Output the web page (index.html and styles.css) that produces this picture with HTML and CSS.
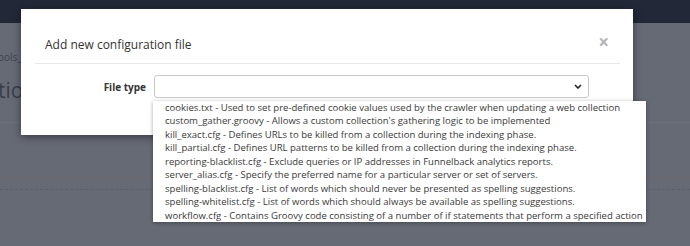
FILE: index.html
```html
<!DOCTYPE html>
<html lang="en">
<head>
    <meta charset="UTF-8">
    <meta name="viewport" content="width=device-width, initial-scale=1.0">
    <title>Add new configuration file</title>
    <link rel="stylesheet" href="styles.css">
</head>
<body>
    <!-- Страница под затемнением -->
    <header class="topbar"></header>
    <main class="page">
        <div class="crumbs">ools_collection</div>
        <h1 class="page-title">tion configuration</h1>
        <div class="panel-line"></div>
        <div class="rule"></div>
        <div class="dashed"></div>
    </main>

    <!-- Модальное окно -->
    <div class="modal">
        <div class="modal-header">
            <h2>Add new configuration file</h2>
            <span class="close">&times;</span>
        </div>
        <div class="modal-body">
            <div class="form-row">
                <label class="form-label">File type</label>
                <div class="select-wrap">
                    <div class="select-box">
                        <svg class="chevron" width="8" height="5" viewBox="0 0 8 5">
                            <path d="M1 1 L4 4 L7 1" fill="none" stroke="#222" stroke-width="1.6"/>
                        </svg>
                    </div>
                    <ul class="options">
                        <li>cookies.txt - Used to set pre-defined cookie values used by the crawler when updating a web collection</li>
                        <li>custom_gather.groovy - Allows a custom collection's gathering logic to be implemented</li>
                        <li>kill_exact.cfg - Defines URLs to be killed from a collection during the indexing phase.</li>
                        <li>kill_partial.cfg - Defines URL patterns to be killed from a collection during the indexing phase.</li>
                        <li>reporting-blacklist.cfg - Exclude queries or IP addresses in Funnelback analytics reports.</li>
                        <li>server_alias.cfg - Specify the preferred name for a particular server or set of servers.</li>
                        <li>spelling-blacklist.cfg - List of words which should never be presented as spelling suggestions.</li>
                        <li>spelling-whitelist.cfg - List of words which should always be available as spelling suggestions.</li>
                        <li>workflow.cfg - Contains Groovy code consisting of a number of if statements that perform a specified action</li>
                    </ul>
                </div>
            </div>
        </div>
    </div>
</body>
</html>
```

FILE: styles.css
```css
body {
    margin: 0;
    font-family: "Open Sans", "Liberation Sans", sans-serif;
    background-color: #666a75;
    color: #333;
    overflow: hidden;
}
.topbar {
    height: 23px;
    background-color: #232838;
}
.page {
    padding-top: 27px;
}
.crumbs {
    font-size: 10px;
    line-height: 14px;
    color: #3e424d;
    margin-left: -2px;
}
.page-title {
    margin: 14px 0 0 -2px;
    font-size: 21px;
    font-weight: normal;
    line-height: 24px;
    color: #3a3e49;
    white-space: nowrap;
}
.panel-line {
    margin-top: 20px;
    height: 1px;
    background-color: #6c707b;
}
.rule {
    margin-top: 54px;
    height: 1px;
    background-color: #6e6569;
}
.dashed {
    margin-top: 11px;
    border-top: 1px dashed #5c606b;
}
.modal {
    position: absolute;
    left: 21px;
    top: 9px;
    width: 612px;
    height: 126px;
    background-color: #fff;
    box-shadow: 0 2px 8px rgba(0,0,0,0.45);
}
.modal-header {
    display: flex;
    justify-content: space-between;
    align-items: flex-start;
    margin: 0 13px 0 14px;
    padding: 26px 11px 8px 10px;
    border-bottom: 1px solid #e8e8e8;
}
.modal-header h2 {
    margin: 0;
    font-size: 12px;
    font-weight: normal;
    line-height: 20px;
    color: #333;
}
.close {
    font-size: 19px;
    font-weight: bold;
    line-height: 15px;
    color: #b5b5b5;
}
.modal-body {
    padding: 11px 0 0 14px;
}
.form-row {
    display: flex;
    align-items: center;
    gap: 8px;
}
.form-label {
    width: 111px;
    text-align: right;
    font-size: 10px;
    font-weight: bold;
    color: #333;
}
.select-wrap {
    position: relative;
}
.select-box {
    width: 433px;
    height: 21px;
    border: 1px solid #c9c9c9;
    border-radius: 3px;
    display: flex;
    align-items: center;
    justify-content: flex-end;
}
.chevron {
    margin-right: 6px;
}
.options {
    position: absolute;
    left: -1px;
    top: 26px;
    width: max-content;
    margin: 0;
    padding: 0 3px 0 12px;
    list-style: none;
    background-color: #fff;
    box-shadow: 0 1px 4px rgba(0,0,0,0.35);
}
.options li {
    font-size: 9.55px;
    line-height: 13.45px;
    color: #3a3a3a;
    white-space: nowrap;
}
```
